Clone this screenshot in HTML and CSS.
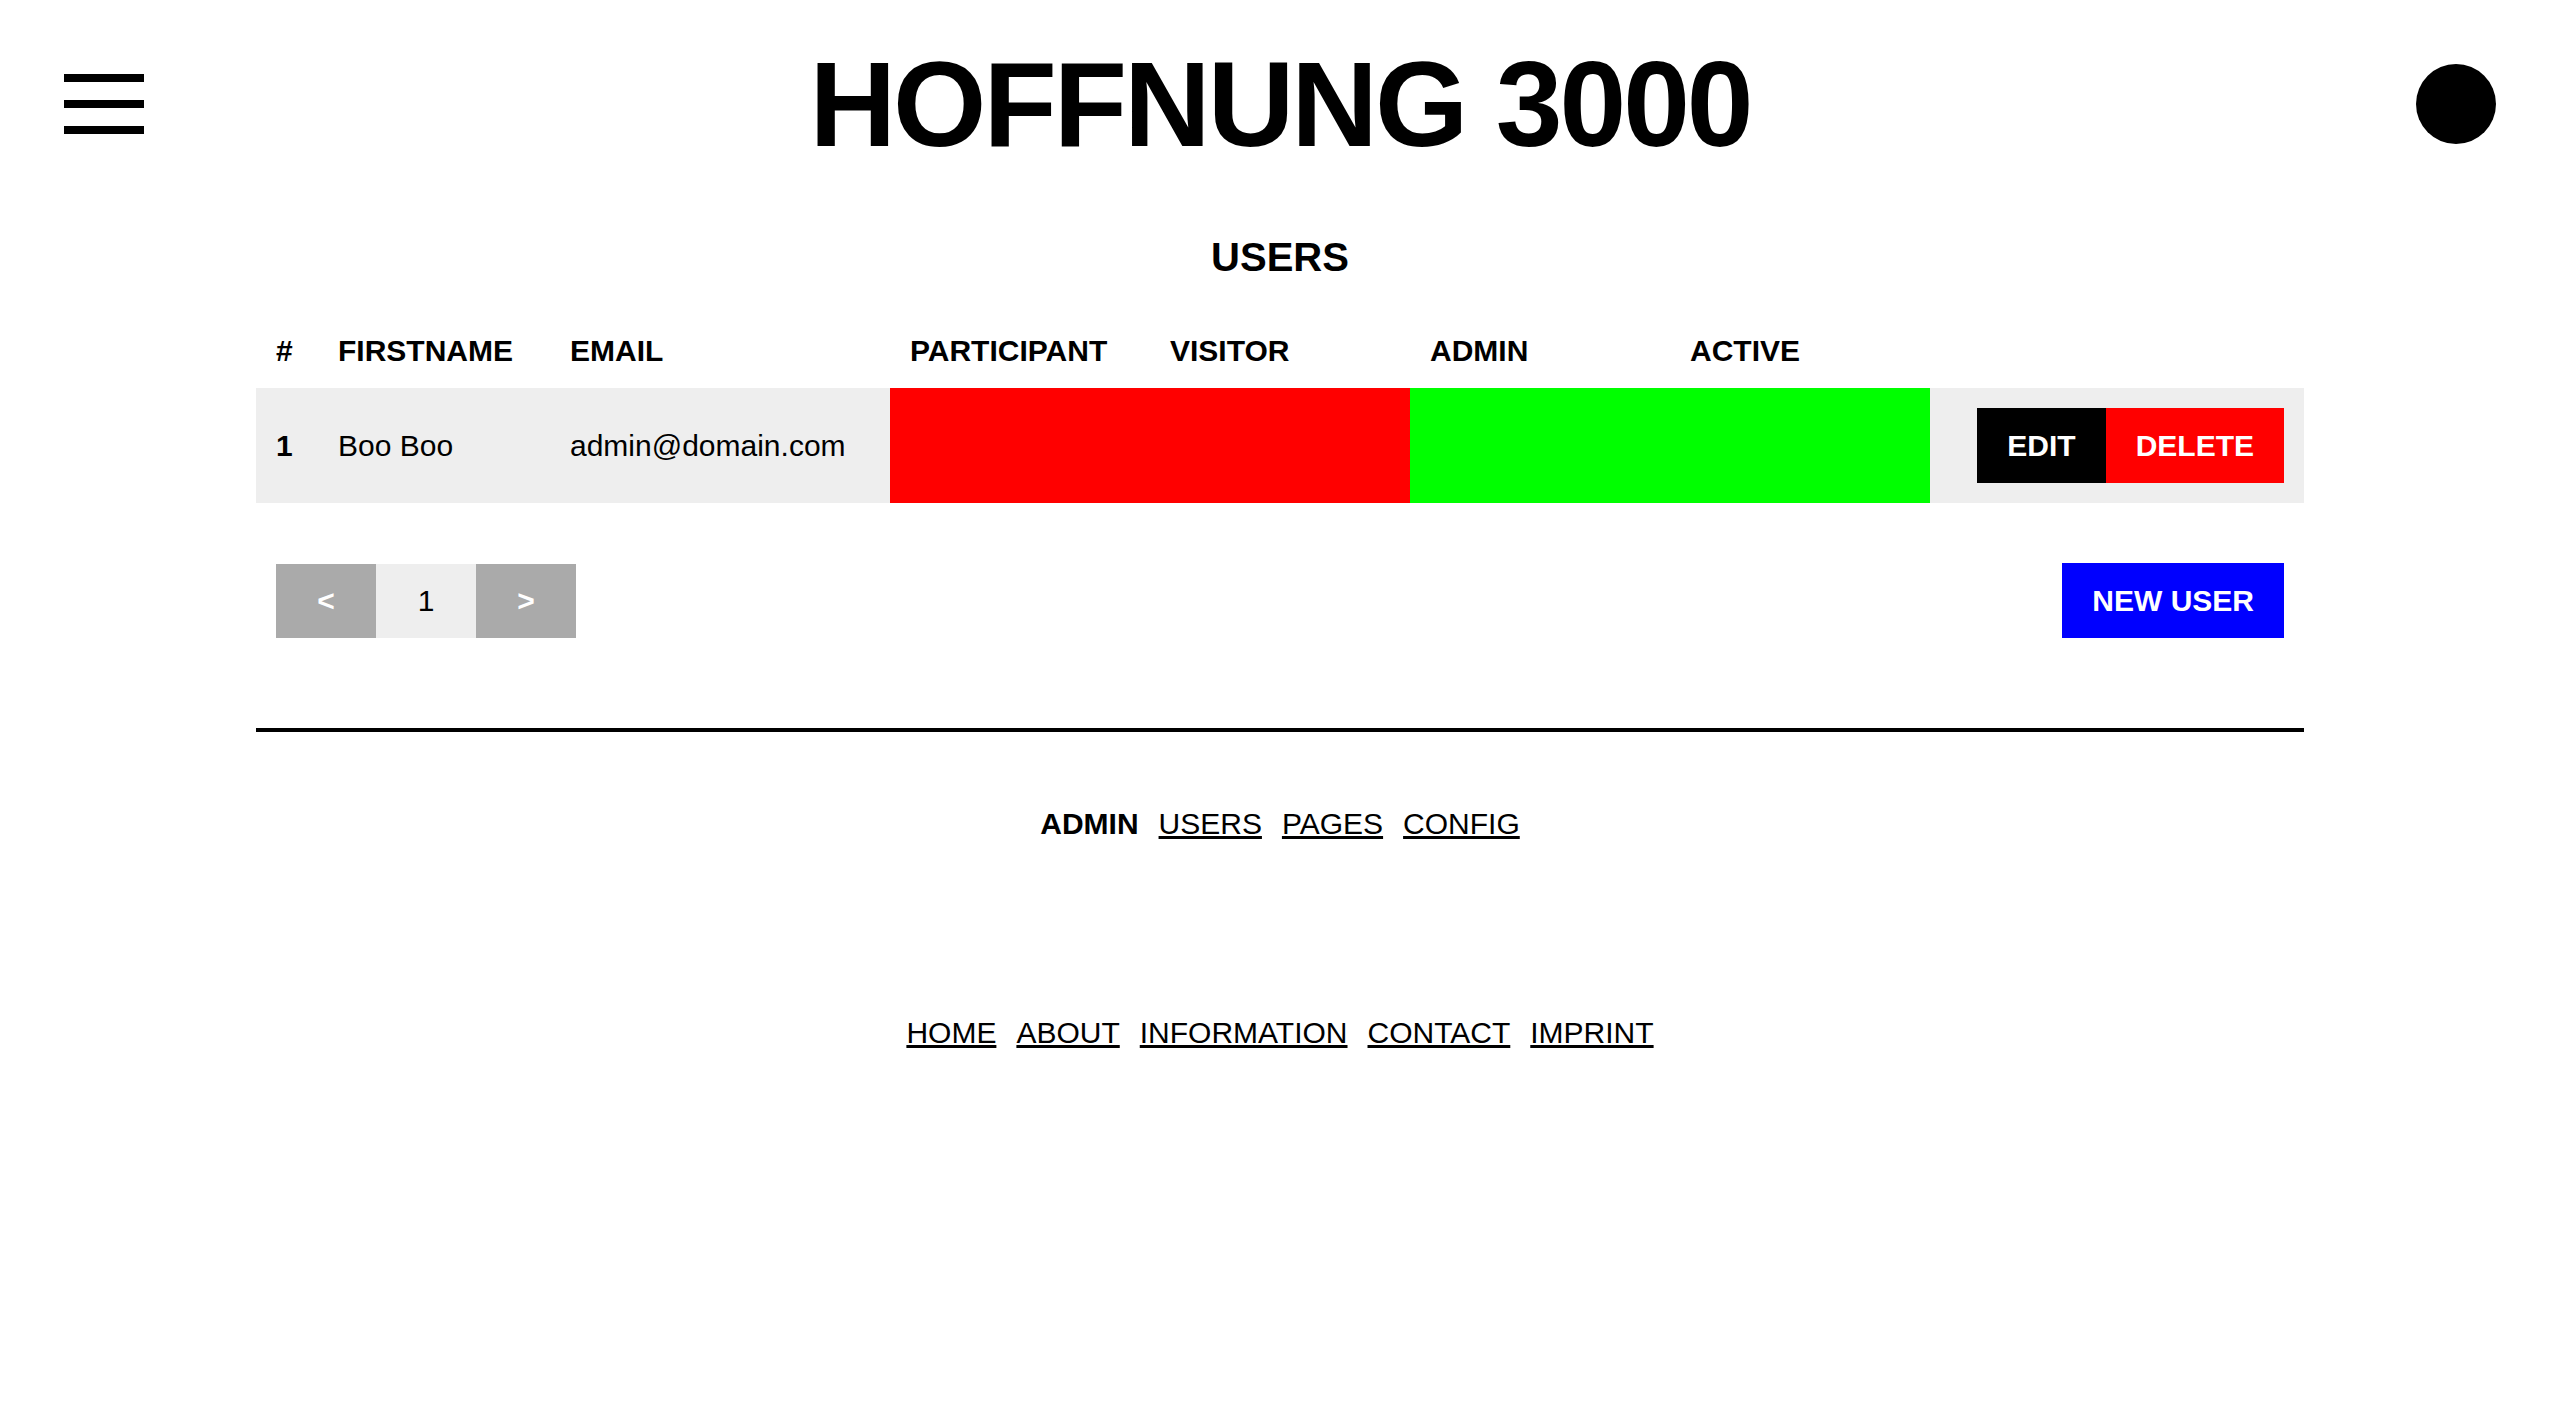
FILE: index.html
```html
<!DOCTYPE html>
<html lang="de">
<head>
  <meta charset="UTF-8">
  <meta name="viewport" content="width=device-width, initial-scale=1.0">
  <title>Hoffnung 3000 - Users</title>
  <link rel="stylesheet" href="styles.css">
</head>
<body>

<header class="topbar">
  <div class="burger">
    <span></span>
    <span></span>
    <span></span>
  </div>
  <h1 class="site-title">HOFFNUNG 3000</h1>
  <div class="avatar"></div>
</header>

<main class="content">
  <h2 class="page-title">USERS</h2>

  <table class="users">
    <colgroup>
      <col class="c-id">
      <col class="c-name">
      <col class="c-email">
      <col class="c-flag">
      <col class="c-flag">
      <col class="c-flag">
      <col class="c-flag">
      <col class="c-actions">
    </colgroup>
    <thead>
      <tr>
        <th>#</th>
        <th>FIRSTNAME</th>
        <th>EMAIL</th>
        <th>PARTICIPANT</th>
        <th>VISITOR</th>
        <th>ADMIN</th>
        <th>ACTIVE</th>
        <th></th>
      </tr>
    </thead>
    <tbody>
      <tr>
        <td class="id">1</td>
        <td>Boo Boo</td>
        <td>admin@domain.com</td>
        <td class="no"></td>
        <td class="no"></td>
        <td class="yes"></td>
        <td class="yes"></td>
        <td class="actions">
          <button class="btn btn-edit">EDIT</button><button class="btn btn-delete">DELETE</button>
        </td>
      </tr>
    </tbody>
  </table>

  <div class="table-foot">
    <div class="pager">
      <button class="pg pg-arrow">&lt;</button>
      <span class="pg pg-current">1</span>
      <button class="pg pg-arrow">&gt;</button>
    </div>
    <button class="btn btn-new">NEW USER</button>
  </div>

  <hr class="divider">

  <nav class="admin-nav">
    <strong>ADMIN</strong>
    <a href="#">USERS</a>
    <a href="#">PAGES</a>
    <a href="#">CONFIG</a>
  </nav>
</main>

<footer class="site-foot">
  <nav class="site-nav">
    <a href="#">HOME</a>
    <a href="#">ABOUT</a>
    <a href="#">INFORMATION</a>
    <a href="#">CONTACT</a>
    <a href="#">IMPRINT</a>
  </nav>
</footer>

</body>
</html>
```

FILE: styles.css
```css
body { margin: 0; font-family: "Liberation Sans", Arial, Helvetica, sans-serif; font-size: 30px; color: #000; background: #fff; }

.topbar { display: flex; justify-content: space-between; align-items: center; padding: 44px 64px; }
.burger { width: 80px; height: 60px; display: flex; flex-direction: column; justify-content: space-between; }
.burger span { display: block; height: 8px; background: #000; }
.site-title { margin: 0; font-size: 120px; line-height: 1; font-weight: bold; letter-spacing: -3px; }
.avatar { width: 80px; height: 80px; border-radius: 50%; background: #000; }

.content { width: 2048px; margin: 0 auto; }
.page-title { margin: 27px 0 34px; font-size: 40px; text-align: center; }

.users { width: 100%; border-collapse: collapse; table-layout: fixed; }
.c-id { width: 62px; }
.c-name { width: 232px; }
.c-email { width: 340px; }
.c-flag { width: 260px; }
.c-actions { width: 374px; }
.users th, .users td { padding: 20px; text-align: left; vertical-align: middle; white-space: nowrap; }
.users th { font-weight: bold; }
.users tbody tr { background: #eee; }
.users td.id { font-weight: bold; }
.users td.no { background: #f00; }
.users td.yes { background: #0f0; }
.users td.actions { text-align: right; }

.btn { display: inline-block; border: none; margin: 0; padding: 20px 30px; font: bold 30px "Liberation Sans", Arial, sans-serif; color: #fff; line-height: 35px; border-radius: 0; }
.btn-edit { background: #000; }
.btn-delete { background: #f00; }
.btn-new { background: #00f; }

.table-foot { display: flex; justify-content: space-between; align-items: center; padding: 60px 20px 0; }
.pager { display: flex; }
.pg { width: 100px; height: 74px; display: flex; align-items: center; justify-content: center; border: none; margin: 0; padding: 0; font: 30px "Liberation Sans", Arial, sans-serif; }
.pg-arrow { background: #aaa; color: #fff; font-weight: bold; }
.pg-current { background: #eee; color: #000; }

.divider { height: 4px; margin: 90px 0 0; border: none; background: #000; }

.admin-nav, .site-nav { display: flex; justify-content: center; gap: 20px; }
.admin-nav { margin-top: 75px; }
.admin-nav a, .site-nav a { color: #000; text-decoration: underline; }
.site-foot { margin-top: 175px; padding-bottom: 200px; }
```
